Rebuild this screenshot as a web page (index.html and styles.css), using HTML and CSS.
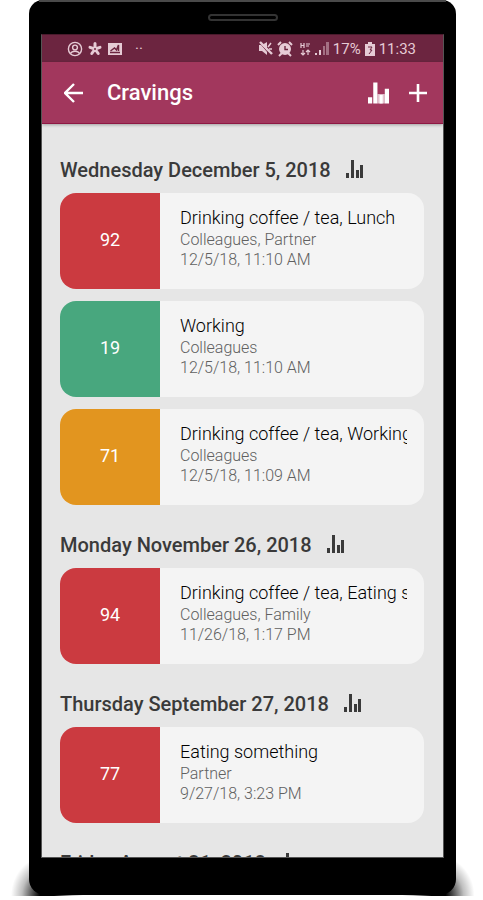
FILE: index.html
```html
<!DOCTYPE html>
<html lang="en">
<head>
<meta charset="utf-8">
<meta name="viewport" content="width=device-width, initial-scale=1">
<title>Cravings</title>
<link rel="stylesheet" href="styles.css">
</head>
<body>
<svg class="defs" width="0" height="0" aria-hidden="true">
  <symbol id="chart" viewBox="0 0 20 20"><path d="M0 14h4v6H0zM5 0h4v20H5zM11 12h3v8h-3zM16 6h4v14h-4z"/><path opacity=".7" d="M9 11h7v9H9z"/></symbol>
  <symbol id="chart-thin" viewBox="0 0 18 18"><path d="M0 13h3v5H0zM5 0h3v18H5zM10 10h3v8h-3zM14 5h3v13h-3z"/></symbol>
</svg>
<div class="phone">
  <div class="speaker"></div>
  <div class="screen">
    <div class="status">
      <div class="status-group">
        <svg width="16" height="16" viewBox="0 0 16 16"><g fill="none" stroke="currentColor" stroke-width="1.4"><circle cx="8" cy="8" r="6.6"/><circle cx="8" cy="6.5" r="2.4"/><path d="M3.5 12.5C5 9.5 11 9.500 12.500 12.500"/></g></svg>
        <svg width="16" height="16" viewBox="0 0 16 16"><g fill="none" stroke="currentColor" stroke-width="3" stroke-linecap="round"><path d="M8 8V2.500M8 8l5-1.700M8 8l3.200 4.500M8 8l-3.200 4.500M8 8L3 6.300"/></g><circle cx="8" cy="8" r="1" fill="#6c2540"/></svg>
        <svg width="16" height="16" viewBox="0 0 16 16"><path fill="currentColor" d="M1 2h14v12H1z"/><path fill="none" stroke="#6c2540" stroke-width="1.500" d="M3 11.500h10M3.500 10l4-3 2 2 2-5v6"/></svg>
        <span class="dots">··</span>
      </div>
      <div class="status-group status-right">
        <svg width="15" height="16" viewBox="0 0 15 16"><path fill="currentColor" d="M1 4h3l5-3v13l-5-4H1z"/><path d="M1 1l12 14" stroke="#6c2540" stroke-width="1"/><path d="M2 1l12 12" stroke="currentColor" stroke-width="2.400"/><path d="M10 6l3-4M11 8h3" stroke="currentColor" stroke-width="1.500"/></svg>
        <svg width="16" height="16" viewBox="0 0 16 16"><circle cx="8" cy="8" r="6" fill="currentColor"/><path d="M1 4l3-3M15 4l-3-3M2 15l3-3M14 15l-3-3" stroke="currentColor" stroke-width="2"/><path d="M8 5v3.500h3" fill="none" stroke="#6c2540" stroke-width="1.400"/></svg>
        <svg class="gap" width="11" height="16" viewBox="0 0 11 16"><path d="M1 2v5M4 2v5M1 4.500h3M6 3h4M6 5h3M3 9v5M1 12l2 2 2-2M8 14V9M6 11l2-2 2 2" fill="none" stroke="currentColor" stroke-width="1.200"/></svg>
        <svg width="14" height="16" viewBox="0 0 14 16"><path fill="currentColor" d="M0 12h2v2H0zM4 9h2v5H4z"/><path fill="currentColor" opacity=".45" d="M8 5h2v9H8zM11 1h3v13h-3z"/></svg>
        <span>17%</span>
        <svg width="10" height="16" viewBox="0 0 10 16"><path fill="currentColor" d="M3 1h4v2h3v12H0V3h3z"/><path d="M3 6h4L5 9h2l-3 4" fill="none" stroke="#6c2540"/></svg>
        <span>11:33</span>
      </div>
    </div>
    <header class="appbar">
      <button class="icon-btn" aria-label="Back"><svg width="20" height="20" viewBox="0 0 20 20"><path d="M19 10H2M10 1l-9 9 9 9" fill="none" stroke="currentColor" stroke-width="2.400"/></svg></button>
      <h1>Cravings</h1>
      <button class="icon-btn" aria-label="Statistics"><svg width="21" height="22" fill="currentColor"><use href="#chart"/></svg></button>
      <button class="icon-btn" aria-label="Add"><svg width="18" height="18" viewBox="0 0 18 18"><path d="M9 0v18M0 9h18" stroke="currentColor" stroke-width="2.600"/></svg></button>
    </header>
    <main class="list">
      <section>
        <h2>Wednesday December 5, 2018 <svg class="chart"><use href="#chart-thin"/></svg></h2>
        <article class="card"><div class="score red">92</div><div class="info"><h3>Drinking coffee / tea, Lunch</h3><p>Colleagues, Partner</p><p>12/5/18, 11:10 AM</p></div></article>
        <article class="card"><div class="score green">19</div><div class="info"><h3>Working</h3><p>Colleagues</p><p>12/5/18, 11:10 AM</p></div></article>
        <article class="card"><div class="score orange">71</div><div class="info"><h3>Drinking coffee / tea, Working</h3><p>Colleagues</p><p>12/5/18, 11:09 AM</p></div></article>
      </section>
      <section>
        <h2>Monday November 26, 2018 <svg class="chart"><use href="#chart-thin"/></svg></h2>
        <article class="card"><div class="score red">94</div><div class="info"><h3>Drinking coffee / tea, Eating something</h3><p>Colleagues, Family</p><p>11/26/18, 1:17 PM</p></div></article>
      </section>
      <section>
        <h2>Thursday September 27, 2018 <svg class="chart"><use href="#chart-thin"/></svg></h2>
        <article class="card"><div class="score red">77</div><div class="info"><h3>Eating something</h3><p>Partner</p><p>9/27/18, 3:23 PM</p></div></article>
      </section>
      <section>
        <h2>Friday August 31, 2018 <svg class="chart"><use href="#chart-thin"/></svg></h2>
      </section>
    </main>
  </div>
</div>
</body>
</html>
```
FILE: styles.css
```css
* { box-sizing: border-box; }

body {
  margin: 0;
  height: 100vh;
  padding: 0 27px 5px 29px;
  background: #fff;
  font-family: Roboto, "Liberation Sans", sans-serif;
  overflow: hidden;
}

.defs { position: absolute; }
svg { display: block; flex: none; }
h1, h2, h3, p { margin: 0; }

.phone {
  position: relative;
  height: 100%;
  display: flex;
  flex-direction: column;
  padding: 0 12px 37px;
  background: #000;
  border-radius: 14px 14px 16px 16px;
}

/* soft ground shadow under the lower corners */
.phone::before {
  content: "";
  position: absolute;
  z-index: -1;
  left: -18px;
  right: -18px;
  bottom: -1px;
  height: 40px;
  background:
    radial-gradient(ellipse 36px 40px at 36px 100%, #000 20%, rgba(0, 0, 0, 0.25) 70%, transparent) left / 50% 100% no-repeat,
    radial-gradient(ellipse 36px 40px at calc(100% - 36px) 100%, #000 20%, rgba(0, 0, 0, 0.25) 70%, transparent) right / 50% 100% no-repeat;
}

/* metal edge along the top */
.phone::after {
  content: "";
  position: absolute;
  top: 0;
  left: 10px;
  right: 10px;
  height: 2px;
  background: #4a4a4a;
}

.speaker {
  width: 70px;
  height: 7px;
  margin: 14px auto 13px;
  border: 2px solid #333;
  border-radius: 4px;
}

.screen {
  flex: 1;
  min-height: 0;
  display: flex;
  flex-direction: column;
  overflow: hidden;
  border: 1px solid #555;
  border-top-color: #4a1a2c;
  background: #e6e6e6;
}

.status {
  flex: none;
  height: 27px;
  padding: 0 27px 0 25px;
  display: flex;
  justify-content: space-between;
  align-items: center;
  background: #6c2540;
  color: #e6cbd5;
  font-size: 15px;
}

.status-group { display: flex; align-items: center; gap: 4px; }
.status .gap { margin-left: 3px; }
.status-right { gap: 4px; }
.dots { margin-left: 8px; }

.appbar {
  position: relative;
  flex: none;
  height: 62px;
  padding: 0 16px 0 22px;
  display: flex;
  align-items: center;
  background: #a2375d;
  border-bottom: 1px solid #8e1844;
  box-shadow: 0 1px 3px rgba(0, 0, 0, 0.3);
  color: #fff;
}

.appbar h1 { flex: 1; margin-left: 23px; font-size: 22px; font-weight: 500; }

.icon-btn {
  padding: 0;
  border: 0;
  background: none;
  color: inherit;
}

.icon-btn + .icon-btn { margin-left: 20px; }

.list { padding: 6px 19px 0 18px; }

h2 {
  display: flex;
  align-items: center;
  gap: 15px;
  height: 46px;
  margin-top: 17px;
  font-size: 20px;
  font-weight: 500;
  color: #3a3a3a;
  white-space: nowrap;
}

.chart { width: 18px; height: 18px; margin-bottom: 2px; fill: #3a3a3a; }

.card {
  display: flex;
  height: 96px;
  border-radius: 16px;
  overflow: hidden;
  background: #f4f4f4;
}

.card + .card { margin-top: 12px; }

.score {
  flex: none;
  width: 100px;
  padding-bottom: 3px;
  display: grid;
  place-items: center;
  color: #fff;
  font-size: 18px;
}

.red { background: #cb3a40; }
.green { background: #48a77e; }
.orange { background: #e2951f; }

.info {
  flex: 1;
  min-width: 0;
  padding: 13px 17px 0 20px;
}

.info h3 {
  overflow: hidden;
  white-space: nowrap;
  font-size: 18px;
  line-height: 24px;
  font-weight: 300;
  color: #000;
}

.info p { font-size: 16px; line-height: 20px; font-weight: 300; color: #606060; }
```
